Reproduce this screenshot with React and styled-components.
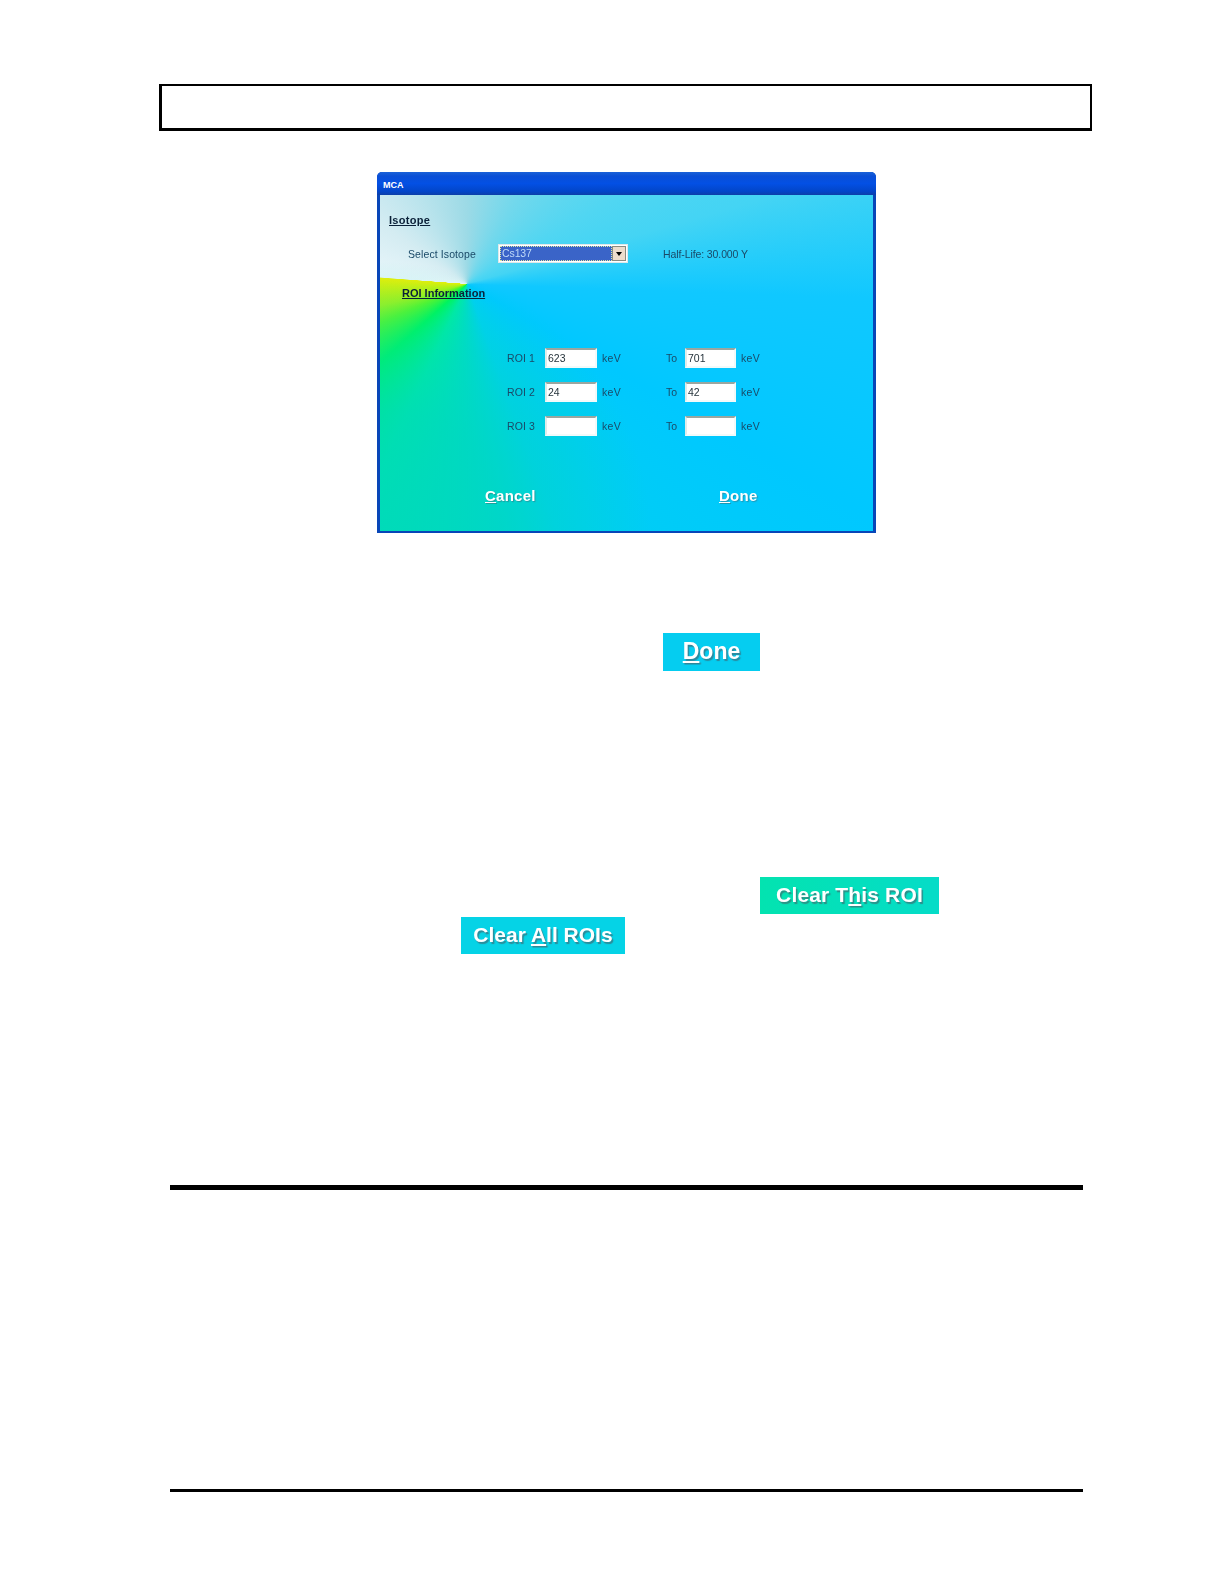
import React from 'react';
import styled, { createGlobalStyle } from 'styled-components';

const Global = createGlobalStyle`
  html, body { margin: 0; padding: 0; background: #fff; }
  body { font-family: "Liberation Sans", Arial, sans-serif; }
`;

const Page = styled.div`
  width: 1224px;
  height: 1584px;
  box-sizing: border-box;
  padding-top: 84px;
  display: flex;
  flex-direction: column;
  overflow: hidden;
`;

const HeaderBox = styled.div`
  box-sizing: border-box;
  width: 933px;
  height: 47px;
  margin-left: 159px;
  border: 2px solid #000;
  border-left-width: 3px;
  border-bottom-width: 3px;
`;

const Dialog = styled.div`
  box-sizing: border-box;
  width: 499px;
  height: 361px;
  margin: 41px 0 0 377px;
  display: flex;
  flex-direction: column;
  border-radius: 5px 5px 0 0;
  overflow: hidden;
  background: #0846b8;
`;

const TitleBar = styled.div`
  height: 23px;
  flex: none;
  box-sizing: border-box;
  padding: 8px 0 0 6px;
  color: #fff;
  font-size: 9px;
  line-height: 11px;
  font-weight: 700;
  background: linear-gradient(180deg, #1a62d8 0%, #0a4fd6 18%, #0350e4 50%, #0245c8 85%, #0c3fa8 100%);
`;

const Client = styled.div`
  flex: 1;
  margin: 0 3px 2px;
  padding: 18px 0 0 9px;
  display: flex;
  flex-direction: column;
  color: #1a4a68;
  font-size: 10.5px;
  filter: blur(0.35px);
  background:
    radial-gradient(circle 270px at 0 100%, rgba(0, 214, 190, 0.75) 0%, rgba(0, 214, 190, 0.6) 45%, rgba(0, 214, 190, 0) 100%),
    conic-gradient(from 0deg at 87px 89px,
      #9cdae6 0deg, #72d8ec 30deg, #50d6f2 60deg, #44d4f4 74deg, #10c8ff 92deg, #00c8ff 120deg,
      #00d0f0 160deg, #00dcc8 180deg, #00eca0 205deg, #00f850 228deg, #60f81c 246deg, #a8f410 256deg,
      #eef000 274deg, #e8f6fa 274.5deg, #d4ecf2 305deg, #9cdae6 360deg);
`;

const SectionTitle = styled.div`
  font-size: 11px;
  line-height: 14px;
  font-weight: 700;
  color: #0a2038;
  text-decoration: underline;
  letter-spacing: ${p => p.$spacing || 0}px;
  margin-left: ${p => p.$indent || 0}px;
  margin-top: ${p => p.$top || 0}px;
`;

const IsotopeRow = styled.div`
  display: flex;
  align-items: center;
  height: 19px;
  margin: 17px 0 0 19px;
`;

const Label = styled.span`
  width: ${p => p.$w}px;
  flex: none;
  letter-spacing: 0.1px;
`;

const Select = styled.div`
  box-sizing: border-box;
  width: 130px;
  height: 19px;
  display: flex;
  align-items: center;
  justify-content: space-between;
  background: #fff;
  padding: 1px;
  border: 1px solid #dfe8ea;
`;

const SelectValue = styled.div`
  flex: 1;
  height: 100%;
  box-sizing: border-box;
  border: 1px dotted #dfe6a0;
  background: #3a64c8;
  color: #c0daf8;
  line-height: 13px;
  padding-left: 1px;
  letter-spacing: -0.1px;
`;

const Arrow = styled.div`
  width: 14px;
  height: 15px;
  flex: none;
  box-sizing: border-box;
  background: #ecdccc;
  border: 1px solid #8a8a80;
  display: flex;
  align-items: center;
  justify-content: center;
  &::after {
    content: "";
    border-left: 3px solid transparent;
    border-right: 3px solid transparent;
    border-top: 4px solid #000;
  }
`;

const HalfLife = styled.span`
  margin-left: 35px;
  letter-spacing: -0.1px;
`;

const RoiGrid = styled.div`
  margin: 48px 0 0 118px;
  display: grid;
  grid-template-columns: 38px 52px 69px 19px 51px auto;
  grid-auto-rows: 20px;
  row-gap: 14px;
  align-items: center;
  justify-content: start;
`;

const Unit = styled.span`
  padding-left: 5px;
  letter-spacing: 0.3px;
`;

const Field = styled.div`
  box-sizing: border-box;
  height: 20px;
  padding: 1px 0 0 1px;
  background: #fff;
  color: #26343c;
  font-size: 10.5px;
  line-height: 14px;
  border: 2px solid #f2fafa;
  border-top-color: #9aa6a0;
  border-left-color: #e0ecea;
`;

const Actions = styled.div`
  margin: 51px 0 0 96px;
  display: flex;
  gap: 183px;
`;

const ActionLabel = styled.span`
  color: #fff;
  font-size: 15px;
  line-height: 18px;
  font-weight: 700;
  letter-spacing: 0.25px;
  text-shadow: 1px 1px 1px rgba(60, 110, 120, 0.55);
  width: ${p => p.$w}px;
  white-space: nowrap;
`;

const Key = styled.span`
  text-decoration: underline;
`;

const ChipRow = styled.div`
  display: flex;
  height: ${p => p.$h}px;
  margin: ${p => p.$top}px 0 0 ${p => p.$left}px;
`;

const Chip = styled.div`
  width: ${p => p.$w}px;
  line-height: ${p => p.$h - 2}px;
  text-align: center;
  white-space: pre;
  color: #fff;
  font-size: ${p => p.$size}px;
  letter-spacing: ${p => p.$spacing || 0}px;
  font-weight: 700;
  filter: blur(0.4px);
  text-shadow: 1.5px 1.5px 1px rgba(70, 90, 100, 0.6);
  background: ${p => p.$bg};
`;

const Rule = styled.div`
  width: 913px;
  height: ${p => p.$h}px;
  margin: ${p => p.$top}px 0 0 170px;
  background: #000;
`;

const rois = [
  ['ROI 1', '623', '701'],
  ['ROI 2', '24', '42'],
  ['ROI 3', '', ''],
];

export default function App() {
  return (
    <Page>
      <Global />
      <HeaderBox />
      <Dialog>
        <TitleBar>MCA</TitleBar>
        <Client>
          <SectionTitle $spacing={0.3}>Isotope</SectionTitle>
          <IsotopeRow>
            <Label $w={90}>Select Isotope</Label>
            <Select>
              <SelectValue>Cs137</SelectValue>
              <Arrow />
            </Select>
            <HalfLife>Half-Life: 30.000 Y</HalfLife>
          </IsotopeRow>
          <SectionTitle $indent={13} $top={23}>ROI Information</SectionTitle>
          <RoiGrid>
            {rois.map(([name, from, to]) => (
              <React.Fragment key={name}>
                <Label $w={38}>{name}</Label>
                <Field>{from}</Field>
                <Unit>keV</Unit>
                <span>To</span>
                <Field>{to}</Field>
                <Unit>keV</Unit>
              </React.Fragment>
            ))}
          </RoiGrid>
          <Actions>
            <ActionLabel $w={51}><Key>C</Key>ancel</ActionLabel>
            <ActionLabel $w={40}><Key>D</Key>one</ActionLabel>
          </Actions>
        </Client>
      </Dialog>
      <ChipRow $h={38} $top={100} $left={663}>
        <Chip $w={97} $h={38} $size={23} $bg="#05cdf0"><Key>D</Key>one</Chip>
      </ChipRow>
      <ChipRow $h={37} $top={206} $left={760}>
        <Chip $w={179} $h={37} $size={21} $spacing={0.15} $bg="linear-gradient(90deg, #03e3b0, #05dcc8)">Clear T<Key>h</Key>is ROI</Chip>
      </ChipRow>
      <ChipRow $h={37} $top={3} $left={461}>
        <Chip $w={164} $h={37} $size={21} $bg="#05d3e6">Clear <Key>A</Key>ll ROIs</Chip>
      </ChipRow>
      <Rule $h={5} $top={231} />
      <Rule $h={3} $top={299} />
    </Page>
  );
}
